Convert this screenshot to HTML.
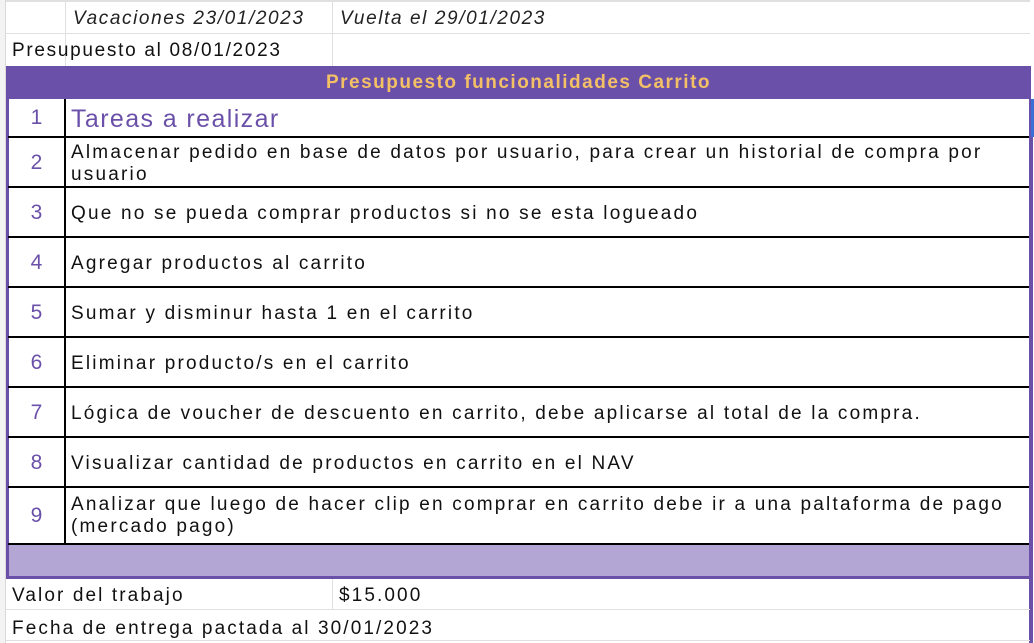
<!DOCTYPE html>
<html><head><meta charset="utf-8"><style>
body{margin:0;width:1034px;height:643px;overflow:hidden;background:#fff;font-family:"Liberation Sans",sans-serif;position:relative}
div{position:absolute;box-sizing:border-box}
.t{font-size:19px;color:#111;white-space:nowrap;letter-spacing:2.1px}
.n{left:8px;width:57px;text-align:center;color:#6a50a8;font-size:21px}
.c{left:71px;font-size:19px;color:#111;line-height:22px;letter-spacing:2.2px;white-space:nowrap}
.hl{left:8px;width:1021px;height:2px;background:#000}
</style></head><body>
<div style="left:0;top:0;width:6px;height:643px;background:#f3f3f3"></div>
<div style="left:5px;top:0;width:1px;height:643px;background:#d9d9d9"></div>
<div style="left:65px;top:0;width:1px;height:66px;background:#e0e0e0"></div>
<div style="left:332px;top:0;width:1px;height:66px;background:#e0e0e0"></div>
<div style="left:6px;top:33px;width:1024px;height:1px;background:#e0e0e0"></div>
<div style="left:6px;top:0;width:1024px;height:2px;background:#e0e0e0"></div>
<div class="t" style="left:73px;top:8px;font-style:italic;color:#222;letter-spacing:1.6px">Vacaciones 23/01/2023</div>
<div class="t" style="left:340px;top:8px;font-style:italic;color:#222;letter-spacing:1.6px">Vuelta el 29/01/2023</div>
<div class="t" style="left:12px;top:40px;letter-spacing:1.7px">Presupuesto al 08/01/2023</div>
<div style="left:6px;top:66px;width:1025px;height:33px;background:#6a50a8"></div>
<div style="left:6px;top:66px;width:1025px;height:33px;line-height:34px;text-align:center;color:#f4c066;font-size:19px;font-weight:bold;letter-spacing:1.5px">Presupuesto funcionalidades Carrito</div>
<div style="left:6px;top:99px;width:3px;height:480px;background:#6a50a8"></div>
<div style="left:1029px;top:99px;width:4px;height:544px;background:#6a50a8"></div>
<div style="left:1031px;top:99px;width:3px;height:38px;background:#3b6fd8"></div>
<div style="left:64px;top:99px;width:2px;height:445px;background:#000"></div>
<div class="hl" style="top:136px"></div>
<div class="hl" style="top:186px"></div>
<div class="hl" style="top:236px"></div>
<div class="hl" style="top:286px"></div>
<div class="hl" style="top:336px"></div>
<div class="hl" style="top:386px"></div>
<div class="hl" style="top:436px"></div>
<div class="hl" style="top:486px"></div>
<div class="hl" style="top:543px"></div>
<div style="left:9px;top:545px;width:1020px;height:31px;background:#b3a5d4"></div>
<div style="left:6px;top:576px;width:1025px;height:3px;background:#6a50a8"></div>
<div class="n" style="top:106px">1</div><div class="c" style="top:105px;font-size:25px;color:#6a50a8;line-height:28px;letter-spacing:1.4px">Tareas a realizar</div>
<div class="n" style="top:151px">2</div><div class="c" style="top:142px">Almacenar pedido en base de datos por usuario, para crear un historial de compra por<br>usuario</div>
<div class="n" style="top:201px">3</div><div class="c" style="top:203px">Que no se pueda comprar productos si no se esta logueado</div>
<div class="n" style="top:251px">4</div><div class="c" style="top:253px">Agregar productos al carrito</div>
<div class="n" style="top:301px">5</div><div class="c" style="top:303px">Sumar y disminur hasta 1 en el carrito</div>
<div class="n" style="top:351px">6</div><div class="c" style="top:353px">Eliminar producto/s en el carrito</div>
<div class="n" style="top:401px">7</div><div class="c" style="top:403px">Lógica de voucher de descuento en carrito, debe aplicarse al total de la compra.</div>
<div class="n" style="top:451px">8</div><div class="c" style="top:453px">Visualizar cantidad de productos en carrito en el NAV</div>
<div class="n" style="top:504px">9</div><div class="c" style="top:494px">Analizar que luego de hacer clip en comprar en carrito debe ir a una paltaforma de pago<br>(mercado pago)</div>
<div style="left:332px;top:579px;width:1px;height:31px;background:#e0e0e0"></div>
<div style="left:6px;top:609px;width:1024px;height:1px;background:#e0e0e0"></div>
<div style="left:6px;top:640px;width:1024px;height:1px;background:#e0e0e0"></div>
<div class="t" style="left:12px;top:585px">Valor del trabajo</div>
<div class="t" style="left:339px;top:585px">$15.000</div>
<div class="t" style="left:12px;top:618px">Fecha de entrega pactada al 30/01/2023</div>
</body></html>
